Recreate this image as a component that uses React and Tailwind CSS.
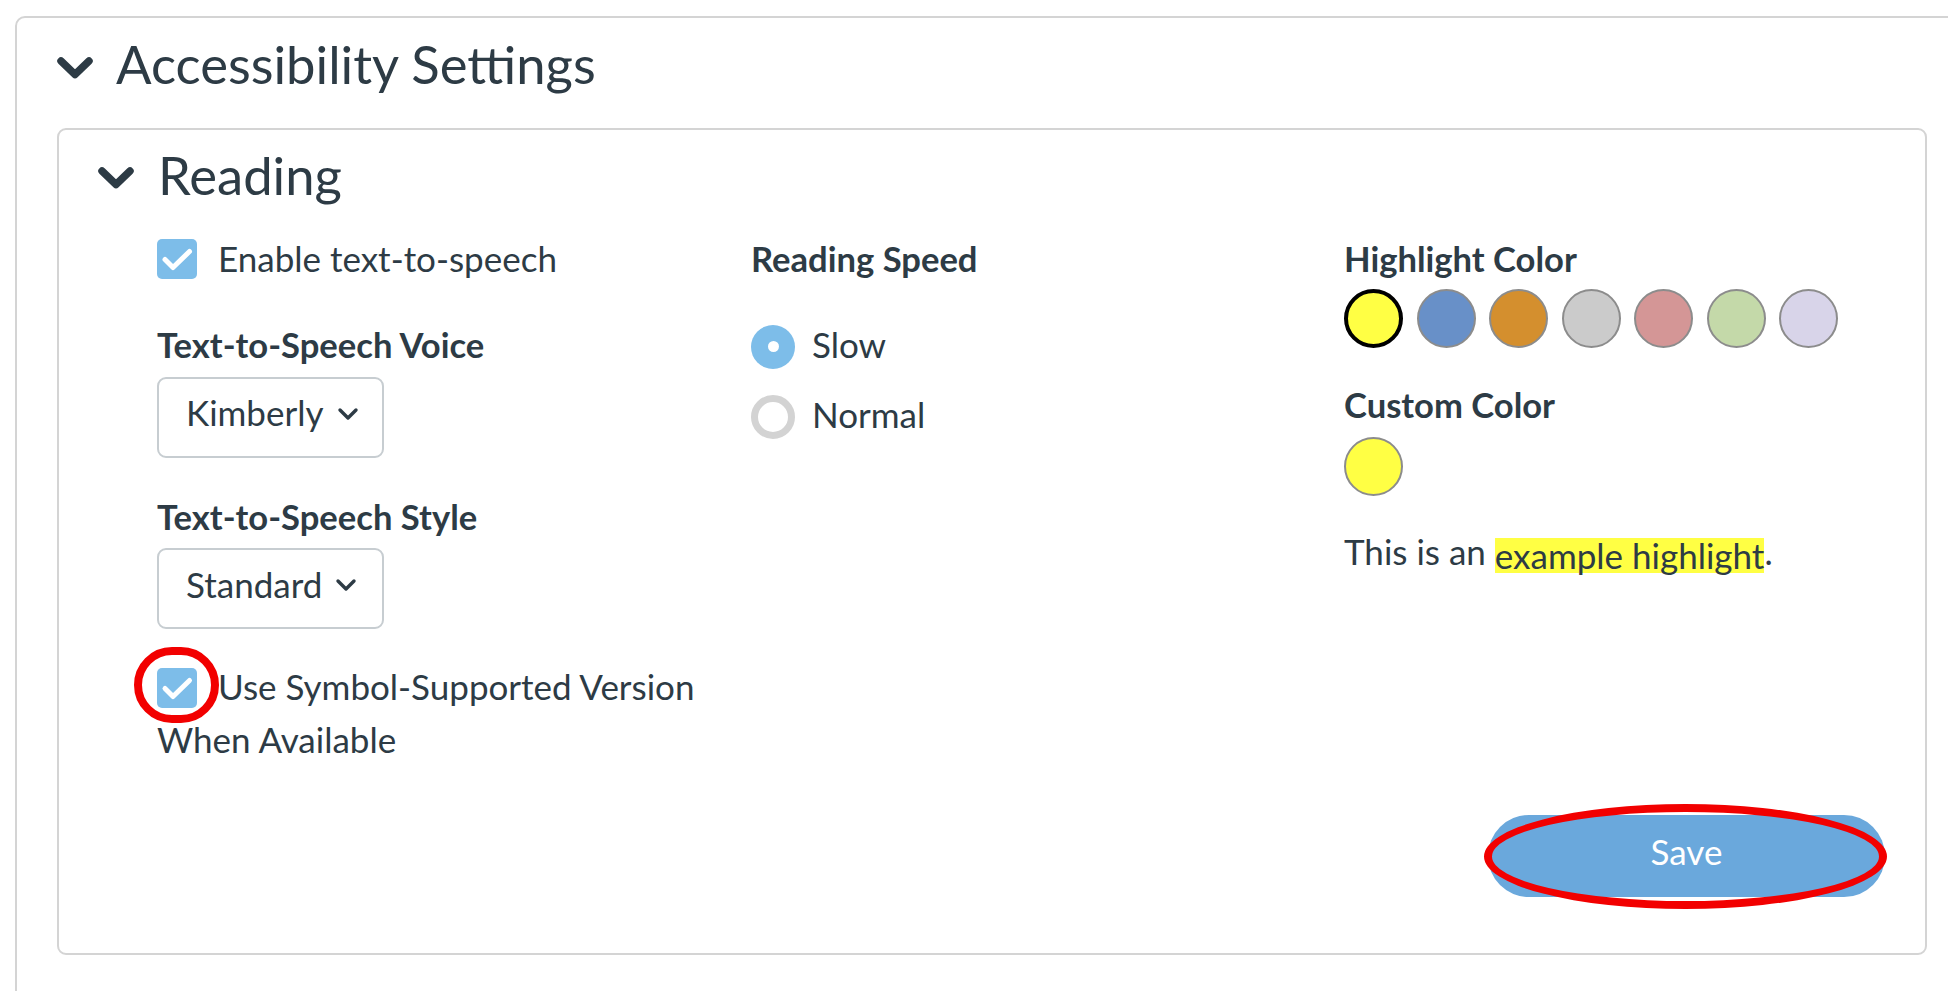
import {useState} from "react";

const swatches = [
    "#ffff44",
    "#6890c8",
    "#d48f2e",
    "#cbcbcb",
    "#d49696",
    "#c4d9a9",
    "#d8d4e9",
];

const BigChevron = () => (
    <svg width="38" height="24" viewBox="0 0 38 24" className="shrink-0 mt-[8px]">
        <polyline
            points="5,5 19,18.5 33,5"
            fill="none"
            stroke="#2d3b45"
            strokeWidth="7.5"
            strokeLinecap="round"
            strokeLinejoin="round"
        />
    </svg>
);

const SmallChevron = () => (
    <svg width="22" height="14" viewBox="0 0 22 14" className="shrink-0 mt-[3px]">
        <polyline
            points="3,3 11,11 19,3"
            fill="none"
            stroke="#2d3b45"
            strokeWidth="3.4"
            strokeLinecap="round"
            strokeLinejoin="round"
        />
    </svg>
);

const CheckBox = ({checked, onClick}) => (
    <span
        onClick={onClick}
        className={"inline-flex w-10 h-10 rounded-[5px] shrink-0 cursor-pointer " + (checked ? "bg-[#7dbde9]" : "bg-white border-2 border-[#c7cdd1]")}
    >
        {checked && (
            <svg width="40" height="40" viewBox="0 0 40 40">
                <path
                    d="M8 20.5 L16 28.5 L32.5 12.5"
                    fill="none"
                    stroke="white"
                    strokeWidth="5"
                    strokeLinecap="round"
                    strokeLinejoin="round"
                />
            </svg>
        )}
    </span>
);

const Select = ({value}) => (
    <div className="w-[227px] h-[81px] border-2 border-[#c7cdd1] rounded-[9px] flex items-center pl-[27px] pb-[10px] gap-[13px]">
        <span className="text-[35px] leading-[1.2]">{value}</span>
        <SmallChevron/>
    </div>
);

const Radio = ({selected}) => (
    selected ? (
        <span className="w-[44px] h-[44px] rounded-full bg-[#7dbde9] flex items-center justify-center shrink-0">
            <span className="w-[11px] h-[11px] rounded-full bg-white"></span>
        </span>
    ) : (
        <span className="w-[44px] h-[44px] rounded-full border-[7px] border-[#d3d3d3] shrink-0"></span>
    )
);

const App = () => {
    const [tts, setTts] = useState(true);
    const [symbols, setSymbols] = useState(true);
    const [speed, setSpeed] = useState("slow");
    const [color, setColor] = useState(0);

    return (
        <div className="w-screen h-screen overflow-hidden bg-white font-['Lato',sans-serif] text-[#2d3b45]">
            <div className="ml-[15px] mt-[16px] w-[1990px] h-[1000px] border-2 border-[#d4d4d4] rounded-[10px]">
                <div className="flex items-center pl-[39px] pt-[14px] gap-[22px]">
                    <BigChevron/>
                    <h1 className="text-[52.6px] leading-[1.2]">Accessibility Settings</h1>
                </div>

                <div className="ml-[40px] mt-[32.5px] w-[1870px] h-[827px] border-2 border-[#d4d4d4] rounded-[9px] flex flex-col">
                    <div className="flex items-center pl-[38px] pt-[13px] gap-[23px]">
                        <BigChevron/>
                        <h2 className="text-[52.6px] leading-[1.2]">Reading</h2>
                    </div>

                    <div className="grid grid-cols-[594px_593px_1fr] pl-[98px] mt-[32px] text-[35px] leading-[42px]">
                        <div className="flex flex-col">
                            <div className="flex items-center gap-[21px] h-[42px]">
                                <CheckBox checked={tts} onClick={() => setTts(!tts)}/>
                                <span className="pb-[2px]">Enable text-to-speech</span>
                            </div>

                            <label className="font-bold text-[34.6px] mt-[44px]">Text-to-Speech Voice</label>
                            <div className="mt-[11px]">
                                <Select value="Kimberly"/>
                            </div>

                            <label className="font-bold text-[34.6px] mt-[38.5px]">Text-to-Speech Style</label>
                            <div className="mt-[10px]">
                                <Select value="Standard"/>
                            </div>

                            <p className="mt-[30.5px] leading-[53px] w-[570px]">
                                <span className="relative inline-flex align-[-8px] mr-[21px]">
                                    <CheckBox checked={symbols} onClick={() => setSymbols(!symbols)}/>
                                    <span className="absolute left-[-23px] top-[-21px] w-[85px] h-[76px] rounded-full border-[8px] border-[#f20000] pointer-events-none"></span>
                                </span>
                                Use Symbol-Supported Version When Available
                            </p>
                        </div>

                        <div className="flex flex-col">
                            <span className="font-bold text-[34.6px]">Reading Speed</span>
                            <div
                                className="flex items-center gap-[17px] h-[44px] mt-[45px] cursor-pointer"
                                onClick={() => setSpeed("slow")}
                            >
                                <Radio selected={speed === "slow"}/>
                                <span className="pb-[5px]">Slow</span>
                            </div>
                            <div
                                className="flex items-center gap-[17px] h-[44px] mt-[26px] cursor-pointer"
                                onClick={() => setSpeed("normal")}
                            >
                                <Radio selected={speed === "normal"}/>
                                <span className="pb-[5px]">Normal</span>
                            </div>
                        </div>

                        <div className="flex flex-col">
                            <span className="font-bold text-[34.6px]">Highlight Color</span>
                            <div className="flex gap-[13.5px] mt-[9px]">
                                {swatches.map((c, i) => (
                                    <span
                                        key={c}
                                        onClick={() => setColor(i)}
                                        className={"w-[59px] h-[59px] rounded-full cursor-pointer " + (color === i ? "border-[4px] border-black" : "border-2 border-[#8c8c8c]")}
                                        style={{backgroundColor: c}}
                                    ></span>
                                ))}
                            </div>

                            <span className="font-bold text-[34.6px] mt-[36.5px]">Custom Color</span>
                            <span className="w-[59px] h-[59px] rounded-full border-2 border-[#8c8c8c] mt-[10.5px]" style={{backgroundColor: swatches[color]}}></span>

                            <p className="mt-[34.5px]">
                                This is an <span className="inline-block leading-[35px] align-[-4px]" style={{backgroundColor: swatches[color]}}>example highlight</span>.
                            </p>
                        </div>
                    </div>

                    <div className="mt-auto flex justify-end pr-[40px] pb-[56px]">
                        <div className="relative">
                            <button className="w-[397px] h-[82px] rounded-full bg-[#6aa8dc] text-white text-[35px] leading-[1.2] pb-[10px]">
                                Save
                            </button>
                            <span className="absolute left-[-4px] top-[-11px] w-[403px] h-[105px] rounded-[50%] border-[8px] border-[#f20000] pointer-events-none"></span>
                        </div>
                    </div>
                </div>
            </div>
        </div>
    );
};

export default App;
